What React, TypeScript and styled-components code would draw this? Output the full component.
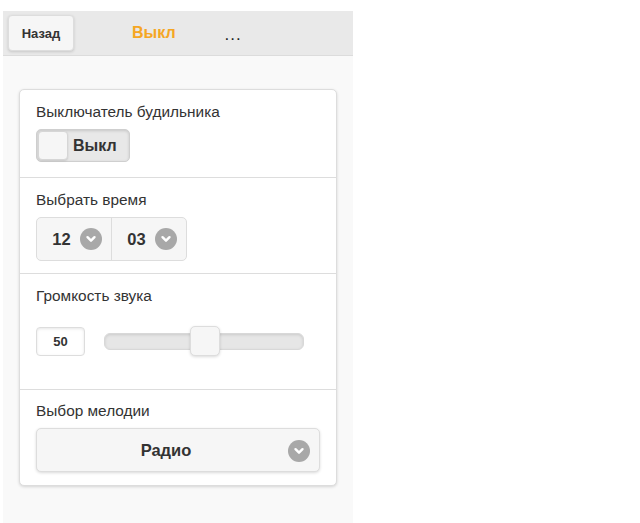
import React from "react";
import styled, { createGlobalStyle } from "styled-components";

const Global = createGlobalStyle`
  html, body { margin: 0; padding: 0; background: #fff; }
  body { font-family: "Liberation Sans", Arial, sans-serif; color: #333; }
`;

const Page = styled.div`
  margin: 11px 0 0 3px;
  width: 350px;
  height: 512px;
  background: #f9f9f9;
  display: flex;
  flex-direction: column;
`;

const Header = styled.div`
  height: 44px;
  background: #e9e9e9;
  border-bottom: 1px solid #dcdcdc;
  display: flex;
  align-items: center;
  padding-left: 5px;
`;

const BackButton = styled.div`
  width: 66px;
  height: 36px;
  box-sizing: border-box;
  background: #f6f6f6;
  border: 1px solid #dddddd;
  border-radius: 4px;
  box-shadow: 0 1px 3px rgba(0, 0, 0, 0.15);
  display: flex;
  align-items: center;
  justify-content: center;
  font-size: 13px;
  font-weight: bold;
  color: #333;
  padding-top: 1px;
`;

const Title = styled.div`
  margin-left: 58px;
  color: #f5a623;
  font-size: 16px;
  font-weight: bold;
`;

const Dots = styled.div`
  margin-left: 49px;
  font-size: 17px;
  letter-spacing: 1px;
  color: #222;
  margin-top: 4px;
`;

const Content = styled.div`
  padding: 33px 15px 0 16px;
`;

const Card = styled.div`
  background: #fff;
  border: 1px solid #dddddd;
  border-radius: 5px;
  box-shadow: 0 1px 3px rgba(0, 0, 0, 0.15);
  width: 318px;
  box-sizing: border-box;
`;

const Section = styled.div<{ $pt: number; $pb: number; $last?: boolean }>`
  padding: ${(p) => p.$pt}px 16px ${(p) => p.$pb}px 16px;
  border-bottom: ${(p) => (p.$last ? "none" : "1px solid #dddddd")};
`;

const Label = styled.div<{ $mb: number }>`
  font-size: 15.4px;
  line-height: 20px;
  color: #333;
  margin-bottom: ${(p) => p.$mb}px;
`;

const Toggle = styled.div`
  width: 94px;
  height: 33px;
  box-sizing: border-box;
  background: #e8e8e8;
  border: 1px solid #cfcfcf;
  border-radius: 5px;
  box-shadow: inset 0 1px 3px rgba(0, 0, 0, 0.15);
  display: flex;
  align-items: center;
  padding: 1px;
`;

const Thumb = styled.div`
  width: 30px;
  height: 29px;
  box-sizing: border-box;
  background: #f6f6f6;
  border: 1px solid #d6d6d6;
  border-radius: 4px;
  box-shadow: 0 1px 2px rgba(0, 0, 0, 0.12);
`;

const ToggleText = styled.div`
  margin-left: 5px;
  font-size: 16px;
  font-weight: bold;
  color: #333;
`;

const Group = styled.div`
  display: inline-flex;
  height: 44px;
  box-sizing: border-box;
  border: 1px solid #dddddd;
  border-radius: 5px;
  background: #f6f6f6;
  overflow: hidden;
`;

const GroupItem = styled.div<{ $first?: boolean }>`
  width: ${(p) => (p.$first ? 75 : 74)}px;
  display: flex;
  align-items: center;
  justify-content: center;
  gap: 9px;
  font-size: 16.5px;
  font-weight: bold;
  color: #333;
  border-right: ${(p) => (p.$first ? "1px solid #dddddd" : "none")};
  padding-left: 6px;
  box-sizing: border-box;
`;

const ArrowCircle = styled.span`
  width: 22px;
  height: 22px;
  border-radius: 50%;
  background: #a8a8a8;
  display: inline-flex;
  align-items: center;
  justify-content: center;
  flex-shrink: 0;
`;

const Arrow = () => (
  <ArrowCircle>
    <svg width="12" height="12" viewBox="0 0 12 12">
      <path d="M2.5 4.2 L6 7.7 L9.5 4.2" stroke="#fff" strokeWidth="2.4" fill="none" strokeLinecap="round" strokeLinejoin="round" />
    </svg>
  </ArrowCircle>
);

const SliderRow = styled.div`
  display: flex;
  align-items: center;
  height: 30px;
`;

const NumberBox = styled.div`
  width: 49px;
  height: 29px;
  box-sizing: border-box;
  border: 1px solid #dddddd;
  border-radius: 4px;
  box-shadow: inset 0 1px 3px rgba(0, 0, 0, 0.1);
  display: flex;
  align-items: center;
  justify-content: center;
  font-size: 13px;
  font-weight: bold;
  color: #333;
  background: #fff;
`;

const Track = styled.div`
  margin-left: 19px;
  width: 200px;
  height: 17px;
  box-sizing: border-box;
  background: #e6e6e6;
  border: 1px solid #d8d8d8;
  border-radius: 6px;
  box-shadow: inset 0 1px 3px rgba(0, 0, 0, 0.12);
  position: relative;
`;

const Handle = styled.div`
  position: absolute;
  left: 85px;
  top: -8px;
  width: 30px;
  height: 30px;
  box-sizing: border-box;
  background: #f6f6f6;
  border: 1px solid #dddddd;
  border-radius: 5px;
  box-shadow: 0 1px 3px rgba(0, 0, 0, 0.15);
`;

const Select = styled.div`
  height: 44px;
  box-sizing: border-box;
  border: 1px solid #dddddd;
  border-radius: 5px;
  background: #f6f6f6;
  box-shadow: 0 1px 3px rgba(0, 0, 0, 0.15);
  display: flex;
  align-items: center;
  position: relative;
  justify-content: center;
  padding-right: 24px;
  font-size: 16.5px;
  font-weight: bold;
  color: #333;
`;

const SelectArrow = styled.div`
  position: absolute;
  right: 9px;
  top: 11px;
  display: flex;
`;

export default function App() {
  return (
    <>
      <Global />
      <Page>
        <Header>
          <BackButton>Назад</BackButton>
          <Title>Выкл</Title>
          <Dots>...</Dots>
        </Header>
        <Content>
          <Card>
            <Section $pt={12} $pb={15}>
              <Label $mb={7}>Выключатель будильника</Label>
              <Toggle>
                <Thumb />
                <ToggleText>Выкл</ToggleText>
              </Toggle>
            </Section>
            <Section $pt={12} $pb={12}>
              <Label $mb={7}>Выбрать время</Label>
              <Group>
                <GroupItem $first>
                  12 <Arrow />
                </GroupItem>
                <GroupItem>
                  03 <Arrow />
                </GroupItem>
              </Group>
            </Section>
            <Section $pt={12} $pb={33}>
              <Label $mb={20}>Громкость звука</Label>
              <SliderRow>
                <NumberBox>50</NumberBox>
                <Track>
                  <Handle />
                </Track>
              </SliderRow>
            </Section>
            <Section $pt={11} $pb={13} $last>
              <Label $mb={7}>Выбор мелодии</Label>
              <Select>
                Радио
                <SelectArrow>
                  <Arrow />
                </SelectArrow>
              </Select>
            </Section>
          </Card>
        </Content>
      </Page>
    </>
  );
}
